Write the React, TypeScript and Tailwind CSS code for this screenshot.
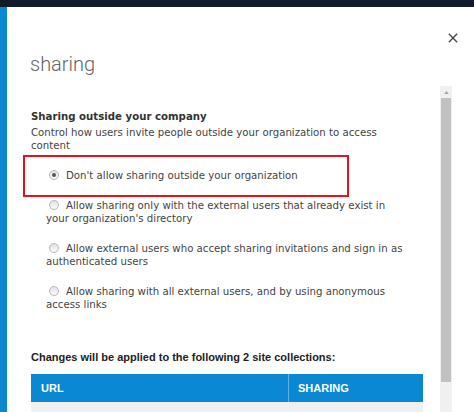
const options = [
  { lines: ["Don't allow sharing outside your organization"], checked: true },
  {
    lines: [
      "Allow sharing only with the external users that already exist in",
      "your organization's directory",
    ],
  },
  {
    lines: [
      "Allow external users who accept sharing invitations and sign in as",
      "authenticated users",
    ],
  },
  {
    lines: [
      "Allow sharing with all external users, and by using anonymous",
      "access links",
    ],
  },
];

function Radio({ checked }: { checked?: boolean }) {
  return (
    <span className="relative inline-block w-[10px] h-[10px] rounded-full border border-[#b8b8b8] bg-gradient-to-b from-[#e4e4e4] to-[#fafafa] align-[-1px] mr-[7px]">
      {checked && (
        <span className="absolute left-[2px] top-[2px] w-[4px] h-[4px] rounded-full bg-[#555]" />
      )}
    </span>
  );
}

export default function App() {
  return (
    <div className="w-[474px] h-[412px] overflow-hidden flex flex-col bg-white">
      {/* barra superior */}
      <div className="h-[7px] bg-[#101c2a] shrink-0" />
      <div className="flex flex-1 min-h-0">
        <div className="w-[7px] bg-[#0b87cf] shrink-0" />
        <div className="relative flex-1 flex flex-col">
          <button className="absolute left-[441px] top-[25px] w-[12px] h-[12px] text-[#444]">
            <svg viewBox="0 0 12 12" className="w-[10px] h-[10px]">
              <path d="M1 1 L11 11 M11 1 L1 11" stroke="currentColor" strokeWidth="1.6" />
            </svg>
          </button>
          <h1 className="pl-[23px] pt-[45px] h-[79px] text-[20px] leading-[24px] font-light text-[#666] font-['Roboto',sans-serif]">
            sharing
          </h1>
          <div className="flex flex-1 min-h-0">
            <div className="w-[392px] ml-[24px] pt-[24px] font-['DejaVu_Sans',sans-serif] text-[10.2px] leading-[13px] text-[#444]">
              <div className="font-bold text-[#333]">Sharing outside your company</div>
              <p className="mt-[3px]">
                Control how users invite people outside your organization to access
                <br />
                content
              </p>
              <div className="-ml-[8px] mt-[3px] w-[326px] h-[42px] border-2 border-[#e1141b]" />
              <div className="-mt-[28px]">
                {options.map((o, i) => (
                  <p key={i} className={`pl-[15px] ${i === 0 ? "" : i === 1 ? "mt-[17px]" : "mt-[17px]"}`}>
                    <span className="pl-[3px]">
                      <Radio checked={o.checked} />
                    </span>
                    {o.lines[0]}
                    {o.lines[1] && (
                      <>
                        <br />
                        {o.lines[1]}
                      </>
                    )}
                  </p>
                ))}
              </div>
              <div className="mt-[39px] font-['Liberation_Sans',sans-serif] font-bold text-[11px] leading-[14px] text-[#222]">
                Changes will be applied to the following 2 site collections:
              </div>
              <div className="mt-[10px] flex h-[28px] bg-[#0a88d2] text-white font-['Liberation_Sans',sans-serif] font-bold text-[11px] items-center">
                <div className="w-[258px] pl-[10px] h-full flex items-center border-r border-[#5fb2e4]">URL</div>
                <div className="pl-[9px]">SHARING</div>
              </div>
              <div className="h-[20px] bg-[#eef0f2]" />
            </div>
            {/* barra de desplazamiento */}
            <div className="ml-[17px] w-[12px] flex flex-col bg-[#f0f0f0]">
              <div className="h-[12px] flex items-center justify-center">
                <svg viewBox="0 0 6 4" className="w-[5px] h-[3px]">
                  <path d="M0 4 L3 0 L6 4 Z" fill="#a0a0a0" />
                </svg>
              </div>
              <div className="h-[284px] mx-[1px] bg-[#c1c1c1]" />
            </div>
          </div>
        </div>
      </div>
    </div>
  );
}
